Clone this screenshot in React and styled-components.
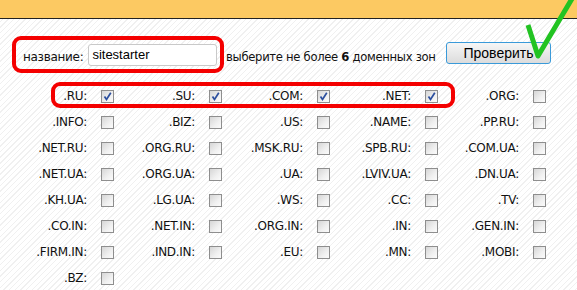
import React from 'react';
import styled, { createGlobalStyle } from 'styled-components';

const Global = createGlobalStyle`
  html, body { margin: 0; padding: 0; }
  body {
    width: 577px;
    height: 290px;
    overflow: hidden;
    background: repeating-linear-gradient(135deg, #ffffff 0 3px, #f0f0f0 3px 4px);
    font-family: "DejaVu Sans", Verdana, sans-serif;
    color: #111;
  }
`;

const Page = styled.div`
  position: relative;
  width: 577px;
  height: 290px;
`;

const TopBar = styled.div`
  height: 18px;
  background: #fcc962;
  border-bottom: 1px solid #222;
`;

const Content = styled.div`
  padding: 17px 0 0 12px;
`;

const FormRow = styled.div`
  display: flex;
  align-items: center;
`;

const NameBox = styled.div`
  display: flex;
  align-items: center;
  box-sizing: border-box;
  width: 212px;
  height: 37px;
  padding: 0 4px 0 7px;
  border: 4px solid #f40000;
  border-radius: 9px;
`;

const Label = styled.span`
  font-size: 12px;
  letter-spacing: -0.3px;
  margin-top: 4px;
  margin-right: 5px;
`;

const NameInput = styled.input`
  box-sizing: border-box;
  width: 129px;
  height: 22px;
  margin: 1px 0 0 0;
  padding: 0 0 2px 3px;
  border: 1px solid #c9c9c9;
  border-radius: 3px;
  background: #fff;
  font-family: "Liberation Sans", Arial, sans-serif;
  font-size: 13px;
  color: #000;
  outline: none;
`;

const Hint = styled.span`
  font-size: 11.6px;
  letter-spacing: -0.3px;
  margin: 4px 0 0 2px;
  white-space: nowrap;
  b { font-weight: bold; }
`;

const CheckButton = styled.button`
  box-sizing: border-box;
  width: 105px;
  height: 22px;
  margin: 0 26px 3px auto;
  padding: 0 0 1px 0;
  border: 1px solid #3a9ad9;
  border-radius: 3px;
  background: linear-gradient(#f6f6f6, #dcdcdc);
  font-family: "Liberation Sans", Arial, sans-serif;
  font-size: 14px;
  color: #000;
`;

const ZoneGrid = styled.div`
  position: relative;
  display: grid;
  grid-template-columns: repeat(5, 108px);
  grid-auto-rows: 26px;
  margin: 10px 0 0 4px;
`;

const Highlight = styled.div`
  position: absolute;
  left: 35px;
  top: -1px;
  width: 404px;
  height: 26px;
  box-sizing: border-box;
  border: 4px solid #f40000;
  border-radius: 9px;
  pointer-events: none;
`;

const Cell = styled.label`
  display: flex;
  align-items: center;
  padding-right: 10px;
`;

const ZoneName = styled.span`
  flex: 1;
  text-align: right;
  font-size: 12px;
  letter-spacing: -0.3px;
  margin-right: 14px;
  white-space: nowrap;
`;

const Box = styled.span`
  box-sizing: border-box;
  width: 13px;
  height: 13px;
  border: 1px solid #8e8e8e;
  background: linear-gradient(135deg, #d6d6d6 0%, #f0f0f0 60%, #fbfbfb 100%);
  display: flex;
  align-items: center;
  justify-content: center;
`;

const Tick = styled.svg`
  position: absolute;
  left: 520px;
  top: 0;
`;

const zones = [
  ['.RU', true], ['.SU', true], ['.COM', true], ['.NET', true], ['.ORG'],
  ['.INFO'], ['.BIZ'], ['.US'], ['.NAME'], ['.PP.RU'],
  ['.NET.RU'], ['.ORG.RU'], ['.MSK.RU'], ['.SPB.RU'], ['.COM.UA'],
  ['.NET.UA'], ['.ORG.UA'], ['.UA'], ['.LVIV.UA'], ['.DN.UA'],
  ['.KH.UA'], ['.LG.UA'], ['.WS'], ['.CC'], ['.TV'],
  ['.CO.IN'], ['.NET.IN'], ['.ORG.IN'], ['.IN'], ['.GEN.IN'],
  ['.FIRM.IN'], ['.IND.IN'], ['.EU'], ['.MN'], ['.MOBI'],
  ['.BZ'],
];

function CheckBox({ checked }) {
  return (
    <Box>
      {checked && (
        <svg width="9" height="9" viewBox="0 0 9 9">
          <path d="M1.5 4.5 L3.5 7.5 L7.8 0.8" fill="none" stroke="#2c4f9e" strokeWidth="1.7" />
        </svg>
      )}
    </Box>
  );
}

export default function App() {
  return (
    <Page>
      <Global />
      <TopBar />
      <Content>
        <FormRow>
          <NameBox>
            <Label>название:</Label>
            <NameInput defaultValue="sitestarter" />
          </NameBox>
          <Hint>выберите не более <b>6</b> доменных зон</Hint>
          <CheckButton>Проверить</CheckButton>
        </FormRow>
        <ZoneGrid>
          {zones.map(([name, checked]) => (
            <Cell key={name}>
              <ZoneName>{name}:</ZoneName>
              <CheckBox checked={checked} />
            </Cell>
          ))}
          <Highlight />
        </ZoneGrid>
      </Content>
      <Tick width="57" height="62" viewBox="0 0 57 62">
        <polyline points="8,25 18,56 53,-3" fill="none" stroke="#22c322" strokeWidth="5" strokeLinejoin="round" />
      </Tick>
    </Page>
  );
}
